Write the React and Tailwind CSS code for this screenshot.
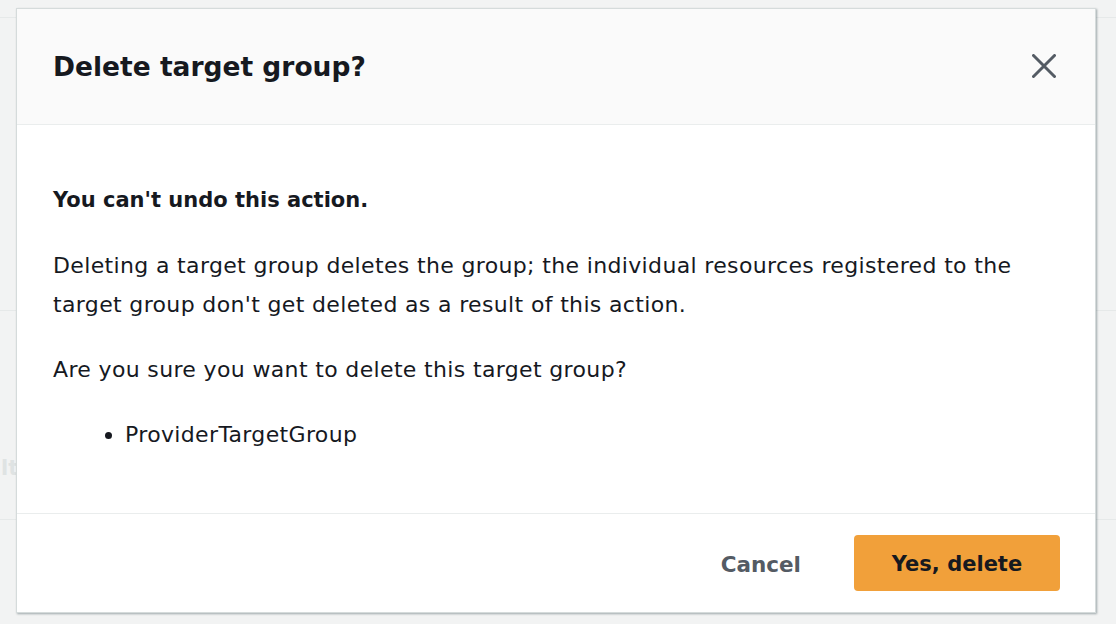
const font = { fontFamily: '"DejaVu Sans", "Open Sans", sans-serif' }

export default function App() {
  return (
    <div className="relative w-[1116px] h-[624px] overflow-hidden bg-[#f2f3f3]" style={font}>
      {/* page behind the dialog */}
      <div className="flex flex-col h-full">
        <div className="h-[18px] border-b border-[#e6e9e9]" />
        <div className="h-[293px] border-b border-[#e6e9e9]" />
        <div className="h-[209px] border-b border-[#e6e9e9] pt-[142px] pl-[1px]">
          <span className="text-[21px] font-bold leading-[30px] text-[#dfe3e3]">lt</span>
        </div>
        <div className="flex-1" />
      </div>

      {/* dialog */}
      <div className="absolute left-[16px] top-[8px] w-[1080px] h-[605px] flex flex-col bg-white border border-[#d5dbdb] shadow-[1px_1px_2px_rgba(0,28,36,0.35)] text-[#16191f]">
        <div className="h-[116px] shrink-0 flex items-center justify-between pl-[36px] pr-[39px] bg-[#fafafa] border-b border-[#eaeded]">
          <h2 className="text-[26.5px] font-bold leading-[36px]">Delete target group?</h2>
          <button className="text-[#545b64] w-[24px] h-[24px] mb-[2px]">
            <svg viewBox="0 0 24 24" className="w-[24px] h-[24px]" fill="none" stroke="currentColor" strokeWidth="3" strokeLinecap="round">
              <path d="M1.5 1.5L22.5 22.5M22.5 1.5L1.5 22.5" />
            </svg>
          </button>
        </div>

        <div className="flex-1 px-[36px] pt-[56px] text-[22px] leading-[39px] tracking-[0.35px]">
          <p className="font-bold text-[21px] tracking-normal">You can't undo this action.</p>
          <p className="mt-[26px]">
            Deleting a target group deletes the group; the individual resources registered to the target group don't get deleted as a result of this action.
          </p>
          <p className="mt-[26px]">Are you sure you want to delete this target group?</p>
          <ul className="mt-[26px] list-disc pl-[72px]">
            <li>ProviderTargetGroup</li>
          </ul>
        </div>

        <div className="h-[99px] shrink-0 flex items-center justify-end gap-[27px] pr-[35px] border-t border-[#eaeded]">
          <button className="px-[26px] pt-[4px] text-[21.5px] font-bold text-[#545b64]">Cancel</button>
          <button className="w-[206px] h-[56px] pt-[3px] rounded-[4px] bg-[#f1a03a] text-[21px] font-bold text-[#16191f]">
            Yes, delete
          </button>
        </div>
      </div>
    </div>
  )
}
